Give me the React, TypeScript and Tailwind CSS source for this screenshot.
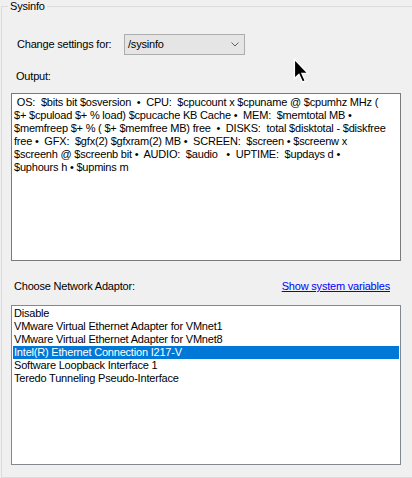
import React from "react";

const outputLines = [
  " OS:  $bits bit $osversion  •  CPU:  $cpucount x $cpuname @ $cpumhz MHz (",
  "$+ $cpuload $+ % load) $cpucache KB Cache •  MEM:  $memtotal MB •",
  "$memfreep $+ % ( $+ $memfree MB) free  •  DISKS:  total $disktotal - $diskfree",
  "free •  GFX:  $gfx(2) $gfxram(2) MB •  SCREEN:  $screen • $screenw x",
  "$screenh @ $screenb bit •  AUDIO:  $audio   •  UPTIME:  $updays d •",
  "$uphours h • $upmins m",
];

const adaptors = [
  "Disable",
  "VMware Virtual Ethernet Adapter for VMnet1",
  "VMware Virtual Ethernet Adapter for VMnet8",
  "Intel(R) Ethernet Connection I217-V",
  "Software Loopback Interface 1",
  "Teredo Tunneling Pseudo-Interface",
];

export default function App() {
  const selected = 3;

  return (
    <div
      className="relative w-[412px] h-[478px] overflow-hidden bg-[#f0f0f0] text-black text-[11px] leading-[13px] tracking-[-0.2px]"
      style={{ fontFamily: '"Liberation Sans", Arial, sans-serif' }}
    >
      <fieldset className="ml-[1px] h-[478px] border border-r-0 border-[#dcdcdc] p-0 m-0">
        <legend className="ml-[6px] px-[2px] leading-[13px]">Sysinfo</legend>

        {/* Settings row */}
        <div className="mt-[21px] flex items-center pl-[15px]">
          <span className="w-[107px]">Change settings for:</span>
          <div className="flex items-center justify-between w-[121px] h-[21px] border border-[#adadad] bg-[#e5e5e5] pl-[3px] pr-[5px]">
            <span>/sysinfo</span>
            <svg width="8" height="5" viewBox="0 0 8 5" fill="none">
              <polyline points="0.5,0.5 4,4 7.5,0.5" stroke="#606060" strokeWidth="1" />
            </svg>
          </div>
        </div>

        <div className="mt-[15px] pl-[14px]">Output:</div>

        {/* Output box */}
        <div className="mt-[10px] ml-[9px] w-[390px] h-[168px] border border-[#7a7a7a] bg-white pt-[2px] pl-[2px]">
          {outputLines.map((line, i) => (
            <div key={i} className="whitespace-pre">
              {line}
            </div>
          ))}
        </div>

        {/* Network adaptor header */}
        <div className="mt-[19px] ml-[9px] w-[390px] flex items-center justify-between pl-[3px] pr-[11px]">
          <span>Choose Network Adaptor:</span>
          <span className="text-[#0000ff] underline">Show system variables</span>
        </div>

        {/* Listbox */}
        <div className="mt-[12px] ml-[9px] w-[390px] h-[160px] border border-[#828790] bg-white p-[1px]">
          {adaptors.map((a, i) => (
            <div
              key={a}
              className={
                i === selected
                  ? "h-[13px] pl-[1px] bg-[#0078d7] text-white whitespace-nowrap"
                  : "h-[13px] pl-[1px] whitespace-nowrap"
              }
            >
              {a}
            </div>
          ))}
        </div>
      </fieldset>

      {/* Mouse pointer overlay */}
      <svg
        className="absolute left-[293px] top-[58px]"
        width="17"
        height="25"
        viewBox="0 0 13 19.5"
      >
        <path
          d="M1,1 L1,16 L4.5,12.8 L7.2,18.8 L9.4,17.8 L6.8,12 L11.5,12 Z"
          fill="#000"
          stroke="#fff"
          strokeWidth="1"
          strokeLinejoin="miter"
        />
      </svg>
    </div>
  );
}
